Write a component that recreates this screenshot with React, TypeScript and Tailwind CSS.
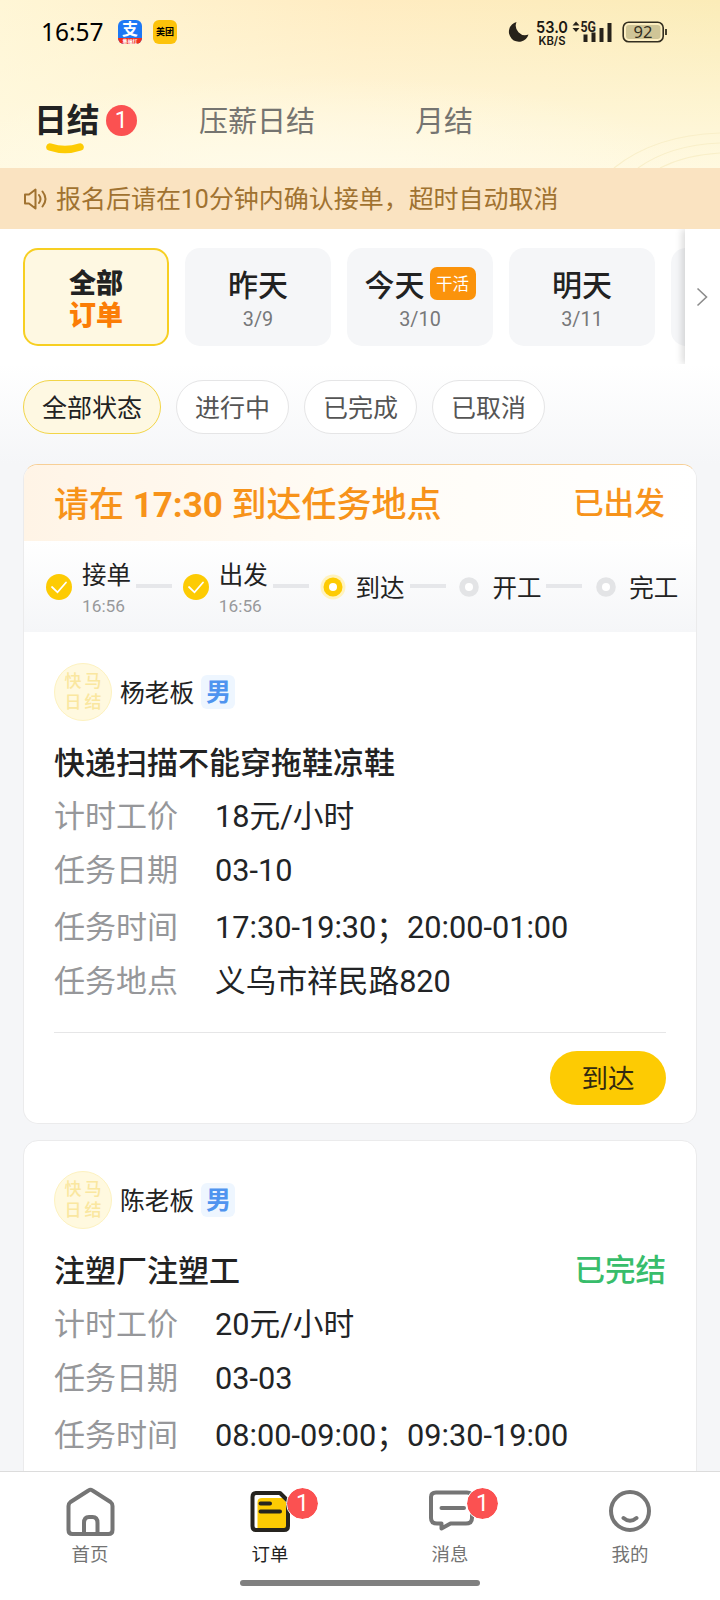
import React from "react";

type StepState = "done" | "current" | "todo";

const steps: { label: string; time?: string; state: StepState }[] = [
  { label: "接单", time: "16:56", state: "done" },
  { label: "出发", time: "16:56", state: "done" },
  { label: "到达", state: "current" },
  { label: "开工", state: "todo" },
  { label: "完工", state: "todo" },
];

const days = [
  { name: "昨天", date: "3/9" },
  { name: "今天", date: "3/10", tag: "干活" },
  { name: "明天", date: "3/11" },
];

function Badge() {
  return (
    <span className="flex h-[31px] w-[31px] items-center justify-center rounded-full bg-[#fb5151] text-[23px] leading-[31px] text-white">
      1
    </span>
  );
}

function StatusBar() {
  return (
    <div className="flex h-[64px] items-center pr-[52px] pl-[41px]">
      <span className="w-[77px] pt-[1px] font-['Noto_Sans','Liberation_Sans',sans-serif] text-[24.5px] text-black">
        16:57
      </span>
      <span className="flex h-[24px] w-[24px] flex-col overflow-hidden rounded-[6px] bg-[#1d78f5] text-center text-white">
        <span className="h-[18px] text-[16px] leading-[19px] font-bold">支</span>
        <span className="h-[6px] bg-[#f0301f] text-[5px] leading-[6px] font-bold">集福红</span>
      </span>
      <span className="ml-[11px] flex h-[24px] w-[24px] items-center justify-center rounded-[6px] bg-[#fdc30b] pt-[1px] text-[9px] font-bold text-black">
        美团
      </span>
      <span className="flex-1" />
      <svg className="h-[22px] w-[22px]" viewBox="0 0 22 22">
        <path d="M8.500 1A10 10 0 1 0 20.500 13.500A9.500 9.500 0 0 1 8.500 1Z" fill="#27221a" />
      </svg>
      <svg className="ml-[6px] h-[32px] w-[34px]" viewBox="0 0 34 32" fontFamily="Inter, Roboto" fontWeight="600" fill="#1b1812">
        <text x="16" y="17.200" textAnchor="middle" fontSize="16.500" textLength="32" lengthAdjust="spacingAndGlyphs">53.0</text>
        <text x="16" y="28.500" textAnchor="middle" fontSize="11.500" textLength="27" lengthAdjust="spacingAndGlyphs">KB/S</text>
      </svg>
      <svg className="ml-[2px] h-[24px] w-[40px]" viewBox="0 0 40 24">
        <path d="M0.500 5.500L4 1.500L7.500 5.500ZM0.500 8L4 12L7.500 8Z" fill="#27221a" />
        <text x="8.500" y="11.500" fontFamily="Roboto" fontSize="14" fontWeight="700" textLength="15.500" lengthAdjust="spacingAndGlyphs" fill="#27221a">5G</text>
        <path d="M13.500 14.500V22M21.500 12.500V22M29.500 8V22M37.500 3V22" stroke="#27221a" strokeWidth="4" strokeLinecap="butt" />
      </svg>
      <svg className="ml-[10px] h-[24px] w-[46px]" viewBox="0 0 46 24">
        <rect x="1.200" y="2.200" width="40" height="19.500" rx="5.500" fill="none" stroke="#332e20" strokeWidth="1.600" />
        <rect x="4" y="5" width="34.500" height="14" rx="3" fill="#cfc597" />
        <path d="M44 9V15" stroke="#332e20" strokeWidth="1.800" />
        <text x="21" y="17.800" textAnchor="middle" fontFamily="Noto Sans" fontSize="16.500" fill="#332e20">92</text>
      </svg>
    </div>
  );
}

function StepIcon({ state }: { state: StepState }) {
  return (
    <svg className="h-[26px] w-[26px] shrink-0" viewBox="0 0 26 26">
      {state === "done" && (
        <>
          <circle cx="13" cy="13" r="13" fill="#fdcb03" />
          <path d="M6 13L11.500 18.300L20 8.500" fill="none" stroke="#fff" strokeWidth="1.800" strokeLinecap="round" />
        </>
      )}
      {state === "current" && (
        <>
          <circle cx="13" cy="13" r="12.500" fill="#fff3bf" />
          <circle cx="13" cy="13" r="9.500" fill="#fdcb03" />
          <circle cx="13" cy="13" r="4" fill="#fff" />
        </>
      )}
      {state === "todo" && (
        <>
          <circle cx="13" cy="13" r="9.800" fill="#e3e4e6" />
          <circle cx="13" cy="13" r="4" fill="#fff" />
        </>
      )}
    </svg>
  );
}

function Boss({ name }: { name: string }) {
  return (
    <div className="flex h-[58px] items-center">
      <span className="flex h-[58px] w-[58px] flex-col items-center justify-center rounded-full border border-[#fdf2c0] bg-[#fff9df] text-[17px] leading-[21px] font-medium tracking-[3px] text-[#fae7a0]">
        <span className="-mr-[3px]">快马</span>
        <span className="-mr-[3px]">日结</span>
      </span>
      <span className="mt-[4px] ml-[8px] text-[24.8px] text-[#222]">{name}</span>
      <span className="ml-[7px] flex h-[34px] w-[34px] items-center justify-center rounded-[6px] bg-[#eef6ff] pt-[1px] text-[25px] font-bold text-[#4f94ef]">
        男
      </span>
    </div>
  );
}

function Row({ label, value, h }: { label: string; value: string; h: string }) {
  return (
    <div className={`flex items-center pt-[2px] text-[31px] leading-[40px] ${h}`}>
      <span className="w-[161px] text-[#96979a]">{label}</span>
      <span className="text-[30.7px] whitespace-nowrap text-[#222426]">{value}</span>
    </div>
  );
}

function NavItem({
  label,
  active,
  badge,
  children,
}: {
  label: string;
  active?: boolean;
  badge?: boolean;
  children: React.ReactNode;
}) {
  return (
    <div className="flex flex-1 flex-col items-center pt-[13px]">
      <div className="relative h-[54px] w-[54px]">
        <svg className="h-[54px] w-[54px]" viewBox="0 0 54 54" fill="none" strokeWidth="4" strokeLinejoin="round" strokeLinecap="round">
          {children}
        </svg>
        {badge && (
          <span className="absolute top-[3px] left-[44px] rounded-full outline-[1.5px] outline-white">
            <Badge />
          </span>
        )}
      </div>
      <span className={`mt-[4px] text-[18.4px] leading-[24px] ${active ? "text-[#222]" : "text-[#737373]"}`}>{label}</span>
    </div>
  );
}

export default function App() {
  return (
    <div className="flex h-[1600px] w-[720px] flex-col overflow-hidden bg-[#f5f6f8] font-['Roboto','Noto_Sans_CJK_SC',sans-serif]">
      <header className="relative h-[168px] shrink-0 bg-[radial-gradient(ellipse_420px_110px_at_300px_185px,#fffbea_0%,#fffbea00_100%),linear-gradient(180deg,#fff9e000_0%,#fff9e0_100%),linear-gradient(90deg,#fff6d6_0%,#ffecc2_50%,#fbecb8_100%)]">
        <svg className="absolute right-0 bottom-0 h-[40px] w-[110px]" viewBox="0 0 110 40" fill="none" stroke="#f9efc9" strokeWidth="1.200">
          <path d="M4 40Q45 7 110 5M28 40Q60 17 110 15M50 40Q75 27 110 25" />
        </svg>
        <StatusBar />
        <nav className="flex h-[104px] pl-[34px] text-[29px] leading-[40px] text-[#757470]">
          <div className="flex w-[165px] flex-col pt-[37px]">
            <div className="flex h-[40px] items-center">
              <span className="text-[32.8px] font-bold text-[#222]">日结</span>
              <span className="-mt-[2px] ml-[6px]">
                <Badge />
              </span>
            </div>
            <svg className="ml-[11px] h-[14px] w-[40px]" viewBox="0 0 40 14">
              <path d="M5 6Q20 11 35 6" fill="none" stroke="#fdcb03" strokeWidth="7.500" strokeLinecap="round" />
            </svg>
          </div>
          <span className="w-[216px] pt-[38px]">压薪日结</span>
          <span className="pt-[38px]">月结</span>
        </nav>
      </header>

      <div className="flex h-[61px] shrink-0 items-center bg-[#fae3c1] pl-[23px] text-[#a07230]">
        <svg className="h-[24px] w-[26px]" viewBox="0 0 26 24" fill="none" stroke="#a07230" strokeWidth="2" strokeLinejoin="round" strokeLinecap="round">
          <path d="M2 7.500H6L12.500 2.500V21.500L6 16.500H2ZM16 8Q19 12 16 16M19.500 4.500Q25.500 12 19.500 19.500" />
        </svg>
        <span className="ml-[7px] pt-[3px] text-[25px] tracking-[-0.03px]">报名后请在10分钟内确认接单，超时自动取消</span>
      </div>

      <div className="flex h-[135px] shrink-0 bg-white">
        <div className="flex min-w-0 flex-1 gap-[16px] overflow-hidden pt-[19px] pl-[23px]">
          <div className="flex h-[98px] w-[146px] shrink-0 flex-col items-center justify-center rounded-[15px] border-2 border-[#f7cf22] bg-[#fef8e2] pt-[5px] text-[27px] leading-[32px] font-black text-[#222]">
            <span>全部</span>
            <span className="text-[#fb7d06]">订单</span>
          </div>
          {days.map((d) => (
            <div key={d.name} className="flex h-[98px] w-[146px] shrink-0 flex-col items-center rounded-[15px] bg-[#f5f6f8] pt-[18px]">
              <div className="flex h-[40px] items-center text-[30px] leading-[40px] font-medium text-[#222]">
                {d.name}
                {d.tag && (
                  <span className="-mt-[5px] ml-[5px] flex h-[33px] w-[46px] items-center justify-center rounded-[7px] bg-[#fb930b] pt-[2px] text-[16.5px] leading-[31px] font-normal text-white">
                    {d.tag}
                  </span>
                )}
              </div>
              <span className="text-[19.8px] leading-[28px] text-[#77787a]">{d.date}</span>
            </div>
          ))}
          <div className="h-[98px] w-[146px] shrink-0 rounded-[15px] bg-[#f5f6f8]" />
        </div>
        <div className="relative flex w-[35px] items-center justify-center bg-white shadow-[-3px_0_7px_rgba(0,0,0,0.14)] [clip-path:inset(0_0_0_-12px)]">
          <svg className="mr-[2px] h-[20px] w-[14px]" viewBox="0 0 14 20" fill="none" stroke="#8c8c8c" strokeWidth="1.600">
            <path d="M2.500 1.500L11.500 10L2.500 18.500" />
          </svg>
        </div>
      </div>

      <div className="flex h-[100px] shrink-0 gap-[15px] bg-gradient-to-b from-white to-[#f5f6f8] pt-[16px] pl-[23px] text-[25px]">
        <span className="flex h-[54px] w-[138px] items-center justify-center rounded-full border border-[#f2d548] bg-[#fef8e2] pt-[4px] text-[#222]">全部状态</span>
        {["进行中", "已完成", "已取消"].map((s) => (
          <span key={s} className="flex h-[54px] w-[113px] items-center justify-center rounded-full border border-[#e5e5e6] bg-white pt-[4px] text-[#555]">
            {s}
          </span>
        ))}
      </div>

      <main className="flex min-h-0 flex-1 flex-col gap-[16px] overflow-hidden px-[23px]">
        <section className="h-[660px] shrink-0 overflow-hidden rounded-[15px] border border-[#ebebec] border-t-[#f7cf96] bg-white">
          <div className="flex h-[76px] items-center justify-between bg-gradient-to-r from-[#fff4e6] via-[#fffcf6] to-white pt-[6px] pr-[31px] pl-[30px] font-medium text-[#f7931a]">
            <span className="text-[35px]">
              请在 <b className="font-bold">17:30</b> 到达任务地点
            </span>
            <span className="-mt-[3px] text-[30.7px]">已出发</span>
          </div>
          <div className="flex h-[91px] items-center bg-gradient-to-b from-white to-[#f5f6f8] pl-[22px]">
            {steps.map((s, i) => (
              <div key={s.label} className="flex w-[136.8px] shrink-0 items-center">
                <StepIcon state={s.state} />
                <div className={`ml-[10px] flex w-[49px] flex-col text-[24.5px] leading-[32px] text-[#222] ${s.time ? "pt-[7px]" : "pt-[4px]"}`}>
                  <span className="whitespace-nowrap">{s.label}</span>
                  {s.time && <span className="text-[17.3px] leading-[29px] text-[#98999b]">{s.time}</span>}
                </div>
                {i < 4 && <span className="-mt-[2px] ml-[5px] h-[4px] w-[36px] bg-[#e6e7ea]" />}
              </div>
            ))}
          </div>
          <div className="flex flex-col px-[30px] pt-[31px]">
            <Boss name="杨老板" />
            <div className="mt-[16px] flex h-[52px] items-center pt-[2px] text-[31px] font-medium text-[#222]">快递扫描不能穿拖鞋凉鞋</div>
            <Row label="计时工价" value="18元/小时" h="h-[54px]" />
            <Row label="任务日期" value="03-10" h="h-[54px]" />
            <Row label="任务时间" value="17:30-19:30；20:00-01:00" h="h-[60px]" />
            <Row label="任务地点" value="义乌市祥民路820" h="h-[48px]" />
            <div className="mt-[27px] h-px bg-[#e6e6e7]" />
            <button className="mt-[18px] flex h-[54px] w-[116px] items-center justify-center self-end rounded-full bg-[#fdcb03] pt-[2px] text-[26.5px] text-[#332a10]">
              到达
            </button>
          </div>
        </section>

        <section className="h-[659px] shrink-0 overflow-hidden rounded-[15px] border border-[#ebebec] bg-white">
          <div className="flex flex-col px-[30px] pt-[30px]">
            <Boss name="陈老板" />
            <div className="mt-[16px] flex h-[52px] items-center justify-between pt-[2px] text-[31px] font-medium text-[#222]">
              <span>注塑厂注塑工</span>
              <span className="-mt-[2px] text-[30.5px] text-[#38bd6b]">已完结</span>
            </div>
            <Row label="计时工价" value="20元/小时" h="h-[54px]" />
            <Row label="任务日期" value="03-03" h="h-[54px]" />
            <Row label="任务时间" value="08:00-09:00；09:30-19:00" h="h-[60px]" />
          </div>
        </section>
      </main>

      <footer className="flex h-[129px] shrink-0 flex-col border-t border-[#dcdcdc] bg-white">
        <div className="flex h-[108px]">
          <NavItem label="首页">
            <path d="M5.500 21Q5.500 18.500 7.500 17L25.500 5.500Q27.500 4 29.500 5.500L47.500 17Q49.500 18.500 49.500 21V45Q49.500 49 45.500 49H9.500Q5.500 49 5.500 45Z" stroke="#757575" />
            <path d="M21 48V38Q21 32 26 32H29.500Q34.500 32 34.500 38V48" stroke="#757575" />
          </NavItem>
          <NavItem label="订单" active badge>
            <path d="M14.500 17Q14.500 13 19 13H40L45 20V43H14.500Z" fill="#fdcb03" />
            <path d="M13 8H37L45 16V41Q45 45 41 45H13Q9.500 45 9.500 41V12Q9.500 8 13 8Z" stroke="#26241f" />
            <path d="M17.500 18.500H27M17.500 26.500H37" stroke="#26241f" />
          </NavItem>
          <NavItem label="消息" badge>
            <path d="M13 7.500H44Q49 7.500 49 12V33Q49 38.500 43 38.500H27.500L18.500 43.500V38.500H14Q8 38.500 8 33V12Q8 7.500 13 7.500Z" stroke="#757575" />
            <path d="M18.500 23H41" stroke="#757575" />
          </NavItem>
          <NavItem label="我的">
            <circle cx="27" cy="26" r="19" stroke="#757575" />
            <path d="M20.500 33Q27 38.500 33.500 33" stroke="#757575" />
          </NavItem>
        </div>
        <div className="h-[6px] w-[240px] self-center rounded-full bg-[#808080]" />
      </footer>
    </div>
  );
}
